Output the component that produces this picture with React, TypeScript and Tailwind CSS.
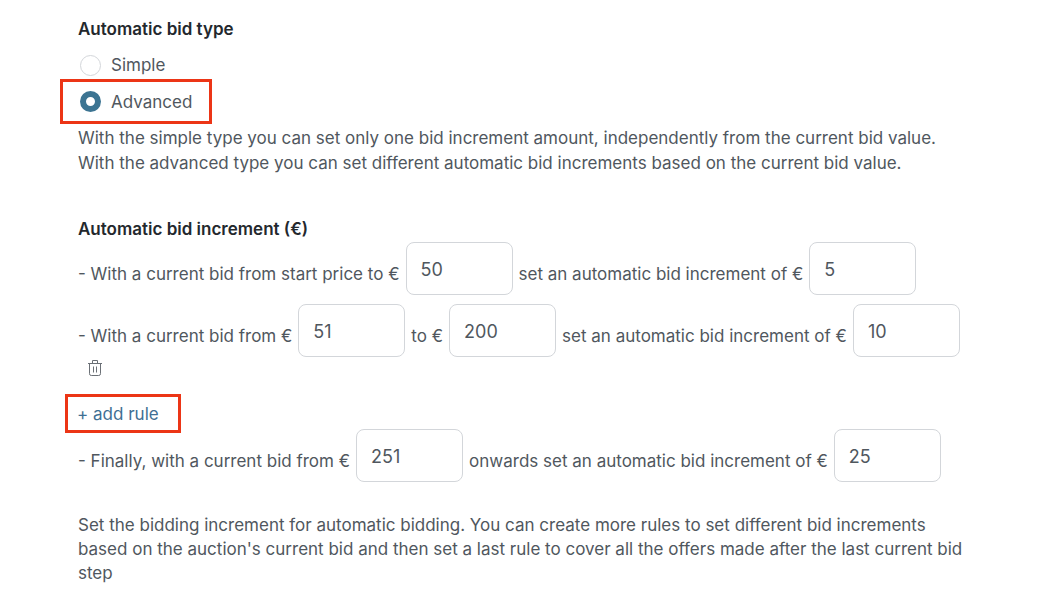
type AmountInputProps = {
  label: string;
  value: string;
};

const AmountInput = ({ label, value }: AmountInputProps) => {
  return (
    <input
      type="text"
      inputMode="numeric"
      aria-label={label}
      defaultValue={value}
      className="w-[107px] h-[53px] px-3.5 pt-0.5 bg-white border border-[#d3d6da] rounded-lg text-lg text-[#50575e] outline-none"
    />
  );
};

const TrashIcon = () => {
  return (
    <svg
      width="14"
      height="16"
      viewBox="0 0 14 16"
      fill="none"
      stroke="#6b7076"
      strokeWidth="1"
    >
      <path d="M0 3.5h14" />
      <path d="M4.5 3.5v-3h5v3" />
      <path d="M1.5 3.5v10.2q0 1.8 1.8 1.8h7.4q1.8 0 1.8-1.8V3.5" />
      <path d="M5.5 6.5v6M8.5 6.5v6" />
    </svg>
  );
};

const radioClass =
  "appearance-none size-[21px] rounded-full border border-[#d3d6da] bg-white checked:border-[6px] checked:border-[#3c7492]";

const ruleClass = "flex flex-wrap items-center gap-x-1.5 gap-y-[3px]";

const App = () => {
  return (
    <form className="px-[78px] pt-[17px] pb-6 bg-white font-['Inter',sans-serif] text-[17px] leading-6 text-[#50575e]">
      <fieldset>
        <legend className="font-semibold text-[#23282d]">
          Automatic bid type
        </legend>
        <div className="mt-3 pl-0.5">
          <label className="flex items-center gap-2.5">
            <input type="radio" name="bid-type" className={radioClass} />
            Simple
          </label>
        </div>
        <div className="mt-0.5 -ml-[18px] w-[152px] h-[45px] pl-[17px] border-3 border-[#ec3516] flex items-center">
          <label className="flex items-center gap-2.5">
            <input
              type="radio"
              name="bid-type"
              defaultChecked
              className={radioClass}
            />
            Advanced
          </label>
        </div>
        <p className="mt-0.5 leading-[25px]">
          With the simple type you can set only one bid increment amount,
          independently from the current bid value.
          <br />
          With the advanced type you can set different automatic bid increments
          based on the current bid value.
        </p>
      </fieldset>

      <fieldset className="mt-[41px]">
        <legend className="font-semibold text-[#23282d]">
          Automatic bid increment (€)
        </legend>
        <div className={`mt-px ${ruleClass}`}>
          <span className="pt-[11px]">
            - With a current bid from start price to €
          </span>
          <AmountInput label="First rule upper bid" value="50" />
          <span className="pt-[11px]">set an automatic bid increment of €</span>
          <AmountInput label="First rule increment" value="5" />
        </div>
        <div className={`mt-[9px] ${ruleClass}`}>
          <span className="pt-[11px]">- With a current bid from €</span>
          <AmountInput label="Second rule lower bid" value="51" />
          <span className="pt-[11px]">to €</span>
          <AmountInput label="Second rule upper bid" value="200" />
          <span className="pt-[11px]">set an automatic bid increment of €</span>
          <AmountInput label="Second rule increment" value="10" />
          <button type="button" aria-label="Delete rule" className="ml-2.5">
            <TrashIcon />
          </button>
        </div>
        <button
          type="button"
          className="block mt-[18px] -ml-[13px] -mb-1 w-[116px] h-[39px] pl-[9px] border-3 border-[#ec3516] text-left text-[#3f6f94]"
        >
          + add rule
        </button>
        <div className={ruleClass}>
          <span className="pt-[11px]">
            - Finally, with a current bid from €
          </span>
          <AmountInput label="Last rule lower bid" value="251" />
          <span className="pt-[11px]">
            onwards set an automatic bid increment of €
          </span>
          <AmountInput label="Last rule increment" value="25" />
        </div>
        <p className="mt-[31px]">
          Set the bidding increment for automatic bidding. You can create more
          rules to set different bid increments based on the auction&apos;s
          current bid and then set a last rule to cover all the offers made
          after the last current bid step
        </p>
      </fieldset>
    </form>
  );
};

export default App;
